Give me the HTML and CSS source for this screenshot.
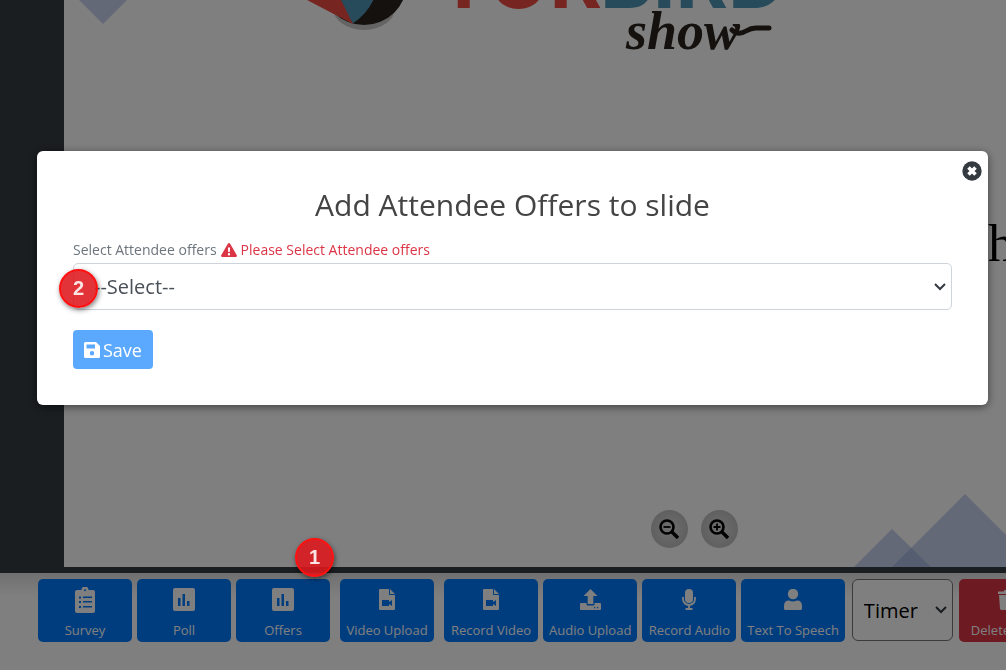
FILE: index.html
```html
<!DOCTYPE html>
<html lang="en">
<head>
<meta charset="utf-8">
<title>Add Attendee Offers to slide</title>
<link rel="stylesheet" href="styles.css">
</head>
<body>
<main class="stage">
  <section class="slide">
    <svg class="art art-top" viewBox="0 0 760 60" aria-hidden="true">
      <path fill="#c6d2ec" d="M15 0h48L39 24z"/>
      <ellipse cx="300" cy="8" rx="31" ry="22" fill="#c9c9c9"/>
      <circle cx="300" cy="-18" r="43" fill="#2b221d"/>
      <path fill="#4f97b5" d="M272-10h41q-6 22-25 34z"/>
      <path fill="#ef4a42" d="M243 0h34l12 24z"/>
      <text class="word word-red" x="373" y="8">TOR</text>
      <text class="word word-blue" x="536" y="8">BIRD</text>
      <text class="script" x="562" y="49">show</text>
      <path d="M668 30q6 6 14 1q5-3 10-3h13" fill="none" stroke="#2b221d" stroke-width="5" stroke-linecap="round"/>
    </svg>
    <p class="slide-text">h</p>
    <svg class="art-hills" viewBox="0 0 152 73" aria-hidden="true">
      <path fill="#8fa6da" fill-opacity=".5" d="M0 73l38-38 39 38z"/>
      <path fill="#8fa6da" fill-opacity=".5" d="M38 73l73-73 73 73z"/>
    </svg>
    <div class="zoom-tools">
      <button class="zoom-btn" type="button" aria-label="Zoom out">
        <svg viewBox="0 0 20 20" width="20" height="20"><circle cx="8" cy="8" r="6.5"/><path d="M13 13l6 6" stroke-width="3.4"/><path d="M4.500 8h7" stroke-width="1.800"/></svg>
      </button>
      <button class="zoom-btn" type="button" aria-label="Zoom in">
        <svg viewBox="0 0 20 20" width="20" height="20"><circle cx="8" cy="8" r="6.500"/><path d="M13 13l6 6" stroke-width="3.400"/><path d="M4.500 8h7M8 4.500v7" stroke-width="1.800"/></svg>
      </button>
    </div>
  </section>
</main>

<nav class="toolbar" aria-label="Slide tools">
  <div class="group">
    <button class="tool" type="button"><span class="icon"><svg viewBox="0 0 20 26" width="20" height="26"><path fill="currentColor" fill-rule="evenodd" d="M2 3h4.500a3.500 3.500 0 0 1 7 0H18a2 2 0 0 1 2 2v19a2 2 0 0 1-2 2H2a2 2 0 0 1-2-2V5a2 2 0 0 1 2-2zM9 3.200a1 1 0 1 0 2 0a1 1 0 1 0-2 0zM4 9.500v2h2v-2zm4 0v1.500h9V9.500zM4 14v2h2v-2zm4 0v1.600h9V14zM4 19v2h2v-2zm4 0v1.500h9V19z"/></svg></span>Survey</button>
    <button class="tool" type="button"><span class="icon"><svg viewBox="0 0 22 23" width="22" height="23"><path fill="currentColor" fill-rule="evenodd" d="M2 0h18a2 2 0 0 1 2 2v19a2 2 0 0 1-2 2H2a2 2 0 0 1-2-2V2a2 2 0 0 1 2-2zM5 10v8h2.500v-8zm4.500-4v12H12V6zM14 13v5h2.500v-5z"/></svg></span>Poll</button>
    <button class="tool" type="button"><span class="icon"><svg viewBox="0 0 22 23" width="22" height="23"><path fill="currentColor" fill-rule="evenodd" d="M2 0h18a2 2 0 0 1 2 2v19a2 2 0 0 1-2 2H2a2 2 0 0 1-2-2V2a2 2 0 0 1 2-2zM5 10v8h2.500v-8zm4.500-4v12H12V6zM14 13v5h2.500v-5z"/></svg></span>Offers<span class="step step-one">1</span></button>
  </div>
  <button class="tool" type="button"><span class="icon"><svg viewBox="0 0 16 21" width="16" height="21"><path fill="currentColor" fill-rule="evenodd" d="M1 0h9v5a1 1 0 0 0 1 1h5v14a1 1 0 0 1-1 1H1a1 1 0 0 1-1-1V1a1 1 0 0 1 1-1zM3 11v6h7v-2l3 2v-6l-3 2v-2zM11 0l5 5h-5z"/></svg></span>Video Upload</button>
  <div class="group">
    <button class="tool" type="button"><span class="icon"><svg viewBox="0 0 16 21" width="16" height="21"><path fill="currentColor" fill-rule="evenodd" d="M1 0h9v5a1 1 0 0 0 1 1h5v14a1 1 0 0 1-1 1H1a1 1 0 0 1-1-1V1a1 1 0 0 1 1-1zM3 11v6h7v-2l3 2v-6l-3 2v-2zM11 0l5 5h-5z"/></svg></span>Record Video</button>
    <button class="tool" type="button"><span class="icon"><svg viewBox="0 0 21 21" width="21" height="21"><path fill="currentColor" fill-rule="evenodd" d="M10.500 0l7 7h-4.200v8H7.700V7H3.500zM1 14h5.500v1.500a1 1 0 0 0 1 1h6a1 1 0 0 0 1-1V14H20a1 1 0 0 1 1 1v5a1 1 0 0 1-1 1H1a1 1 0 0 1-1-1v-5a1 1 0 0 1 1-1zM14 18v1.200h1.200V18zm3 0v1.200h1.200V18z"/></svg></span>Audio Upload</button>
    <button class="tool" type="button"><span class="icon"><svg viewBox="0 0 14 21" width="14" height="21"><rect x="3" width="8" height="14" rx="4" fill="currentColor"/><path d="M1 8v2a6 6 0 0 0 12 0V8M7 16v4M3.500 20h7" fill="none" stroke="currentColor" stroke-width="1.800"/></svg></span>Record Audio</button>
    <button class="tool" type="button"><span class="icon"><svg viewBox="0 0 18 21" width="18" height="21"><circle cx="9" cy="5" r="5.200" fill="currentColor"/><path fill="currentColor" d="M5 11.500q4 2 8 0q5 0 5 5.500v2.500q0 1.500-1.500 1.500h-15Q0 21 0 19.500V17q0-5.500 5-5.500z"/></svg></span>Text To Speech</button>
  </div>
  <select class="timer" aria-label="Timer"><option>Timer</option></select>
  <button class="tool tool-danger" type="button"><span class="icon"><svg viewBox="0 0 18 20" width="18" height="20"><path fill="currentColor" d="M0 1.500h5.500l1-1.500h5l1 1.500H18V4H0zM1 5h16l-1 13.500q-.2 1.500-1.600 1.500H3.600Q2.200 20 2 18.500z"/></svg></span>Delete Slide</button>
</nav>

<div class="overlay">
  <div class="modal" role="dialog" aria-modal="true" aria-labelledby="title">
    <button class="close" type="button" aria-label="Close"><svg viewBox="0 0 20 20" width="20" height="20"><circle cx="10" cy="10" r="9.700" fill="#343a40"/><path d="M6.500 6.500l7 7M13.500 6.500l-7 7" stroke="#fff" stroke-width="3.600"/></svg></button>
    <h1 class="title" id="title">Add Attendee Offers to slide</h1>
    <form class="form">
      <div class="field">
        <div class="label-row">
          <label for="offer">Select Attendee offers</label>
          <span class="error"><svg viewBox="0 0 16 14" width="16" height="14"><path fill="currentColor" fill-rule="evenodd" d="M7 .6q1-1.200 2 0l6.800 11.600q.5 1.300-.8 1.800H1q-1.300-.5-.8-1.800zM6.900 4.500l.3 4.500h1.600l.3-4.500zM8 10a1.200 1.200 0 1 0 0 2.400A1.200 1.200 0 0 0 8 10z"/></svg>Please Select Attendee offers</span>
        </div>
        <select class="select" id="offer"><option>--Select--</option></select>
        <span class="step step-two">2</span>
      </div>
      <button class="save" type="button"><svg viewBox="0 0 16 16" width="16" height="16"><path fill="currentColor" fill-rule="evenodd" d="M1.500 0H12l4 4v10.500q0 1.500-1.500 1.500h-13Q0 16 0 14.500v-13Q0 0 1.500 0zM2.500 2.500v4h8.500v-4zM8 9a2.200 2.200 0 1 0 0 4.400A2.200 2.200 0 0 0 8 9z"/></svg>Save</button>
    </form>
  </div>
</div>
</body>
</html>
```

FILE: styles.css
```css
* { box-sizing: border-box; }

body {
  margin: 0;
  min-height: 100vh;
  display: flex;
  flex-direction: column;
  overflow: hidden;
  background: #fff;
  color: #495057;
  font-family: "Open Sans", "Noto Sans", sans-serif;
}

button, select { font-family: inherit; }
svg { display: block; flex: none; }

.stage {
  flex: 1;
  display: flex;
  padding: 0 0 6px 64px;
  background: #343c41;
}

.slide {
  position: relative;
  flex: 1;
  overflow: hidden;
  background: #fff;
}

.art { position: absolute; top: 0; left: 0; width: 760px; height: 60px; }
.word { font: 700 80px Inter, sans-serif; }
.word-red { fill: #ef4a42; }
.word-blue { fill: #4f97b5; }
.script { font: italic 700 54px "Liberation Serif", cursive; fill: #2b221d; }
.art-hills { position: absolute; right: 0; bottom: 0; width: 152px; height: 73px; }

.slide-text {
  position: absolute;
  top: 214px;
  left: 924px;
  margin: 0;
  color: #000;
  font: 52px/60px "Liberation Serif", serif;
}

.zoom-tools {
  position: absolute;
  bottom: 19px;
  left: 587px;
  display: flex;
  gap: 13px;
}

.zoom-btn {
  width: 37px;
  height: 38px;
  padding: 0 0 0 8px;
  border: 0;
  border-radius: 50%;
  background: radial-gradient(#dcdcdc, #b4b4b4);
}

.zoom-btn svg { fill: none; stroke: #000; stroke-width: 2.6; }

.toolbar {
  display: flex;
  gap: 10px;
  height: 97px;
  padding: 6px 0 0 38px;
  background: linear-gradient(#e0e0e0, #fff 24px);
}

.group { display: flex; gap: 5px; }

.tool {
  position: relative;
  flex: none;
  display: flex;
  flex-direction: column;
  align-items: center;
  min-width: 94px;
  height: 63px;
  padding: 0 6px;
  border: 0;
  border-radius: 5px;
  background: #007bff;
  color: #fff;
  font-size: 13px;
  line-height: 20px;
  white-space: nowrap;
}

.icon { display: flex; align-items: center; height: 41px; }
.tool-danger { margin-left: -4px; padding: 0 12px; background: #dc3545; }

.timer, .select {
  appearance: none;
  background: #fff url("data:image/svg+xml,%3Csvg xmlns='http://www.w3.org/2000/svg' width='12' height='8' viewBox='0 0 12 8'%3E%3Cpath d='M1 1l5 5 5-5' fill='none' stroke='%23343a40' stroke-width='2'/%3E%3C/svg%3E") no-repeat right 5px center;
}

.timer {
  flex: none;
  width: 101px;
  height: 62px;
  margin-left: -3px;
  padding: 0 0 0 11px;
  border: 1px solid #767676;
  border-radius: 6px;
  color: #000;
  font-size: 20px;
}

.overlay {
  position: fixed;
  inset: 0;
  padding: 151px 18px 0 37px;
  background: rgba(0, 0, 0, .5);
}

.modal {
  position: relative;
  padding: 36px;
  border-radius: 6px;
  background: #fff;
  box-shadow: 0 2px 8px rgba(0, 0, 0, .5);
}

.close {
  position: absolute;
  top: 10px;
  right: 6px;
  padding: 0;
  border: 0;
  background: none;
}

.title {
  margin: 0 0 17px;
  color: #444;
  font-size: 30px;
  font-weight: 400;
  line-height: 36px;
  text-align: center;
}

.field { position: relative; margin-bottom: 20px; }

.label-row {
  display: flex;
  gap: 4px;
  color: #6c757d;
  font-size: 14px;
  line-height: 20px;
  margin-bottom: 3px;
}

.error { display: flex; align-items: center; gap: 4px; color: #dc3545; }

.select {
  display: block;
  width: 100%;
  height: 47px;
  padding: 0 20px;
  border: 1px solid #ced4da;
  border-radius: 5px;
  color: #495057;
  font-size: 20px;
}

.save {
  display: flex;
  align-items: center;
  gap: 3px;
  height: 39px;
  padding: 0 11px;
  border: 0;
  border-radius: 4px;
  background: #5aa9ff;
  color: #fff;
  font-size: 18px;
}

.step {
  position: absolute;
  z-index: 2;
  width: 39px;
  height: 39px;
  border: 2px solid #f11;
  border-radius: 50%;
  background: rgba(222, 24, 28, .88);
  box-shadow: 1px 2px 5px rgba(0, 0, 0, .5);
  color: #fde4e4;
  font: 700 20px/35px "Liberation Sans", sans-serif;
  text-align: center;
}

.step-one { top: -41px; right: -4px; }
.step-two { bottom: 2px; left: -14px; }
```
